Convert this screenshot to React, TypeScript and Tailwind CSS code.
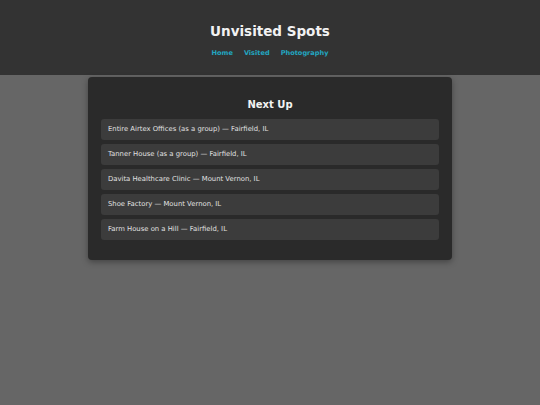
import React from "react";

const items = [
  "Entire Airtex Offices (as a group) — Fairfield, IL",
  "Tanner House (as a group) — Fairfield, IL",
  "Davita Healthcare Clinic — Mount Vernon, IL",
  "Shoe Factory — Mount Vernon, IL",
  "Farm House on a Hill — Fairfield, IL",
];

export default function App() {
  return (
    <div
      className="min-h-[405px] bg-[#666666] text-[#e6e6e6]"
      style={{ fontFamily: '"DejaVu Sans", Verdana, sans-serif' }}
    >
      <header className="bg-[#333333] h-[75px] flex flex-col items-center pt-[22px]">
        <h1 className="text-[13.5px] font-bold leading-[18px] text-[#f2f2f2]">Unvisited Spots</h1>
        <nav className="flex gap-[11px] mt-[8px] text-[6.6px] font-bold text-[#22a6c1] leading-[10px]">
          <a>Home</a>
          <a>Visited</a>
          <a>Photography</a>
        </nav>
      </header>
      <main className="flex justify-center pt-[2px]">
        <section className="w-[364px] bg-[#2a2a2a] rounded-[4px] shadow-[0_2px_6px_rgba(0,0,0,0.35)] px-[13px] pt-[21px] pb-[20px]">
          <h2 className="text-center text-[10px] font-bold leading-[14px] text-[#f2f2f2] mb-[7px]">Next Up</h2>
          <ul className="flex flex-col gap-[4px]">
            {items.map((t) => (
              <li
                key={t}
                className="bg-[#3c3c3c] rounded-[3px] h-[21px] flex items-center px-[7px] text-[6.85px] text-[#e0e0e0]"
              >
                {t}
              </li>
            ))}
          </ul>
        </section>
      </main>
    </div>
  );
}
